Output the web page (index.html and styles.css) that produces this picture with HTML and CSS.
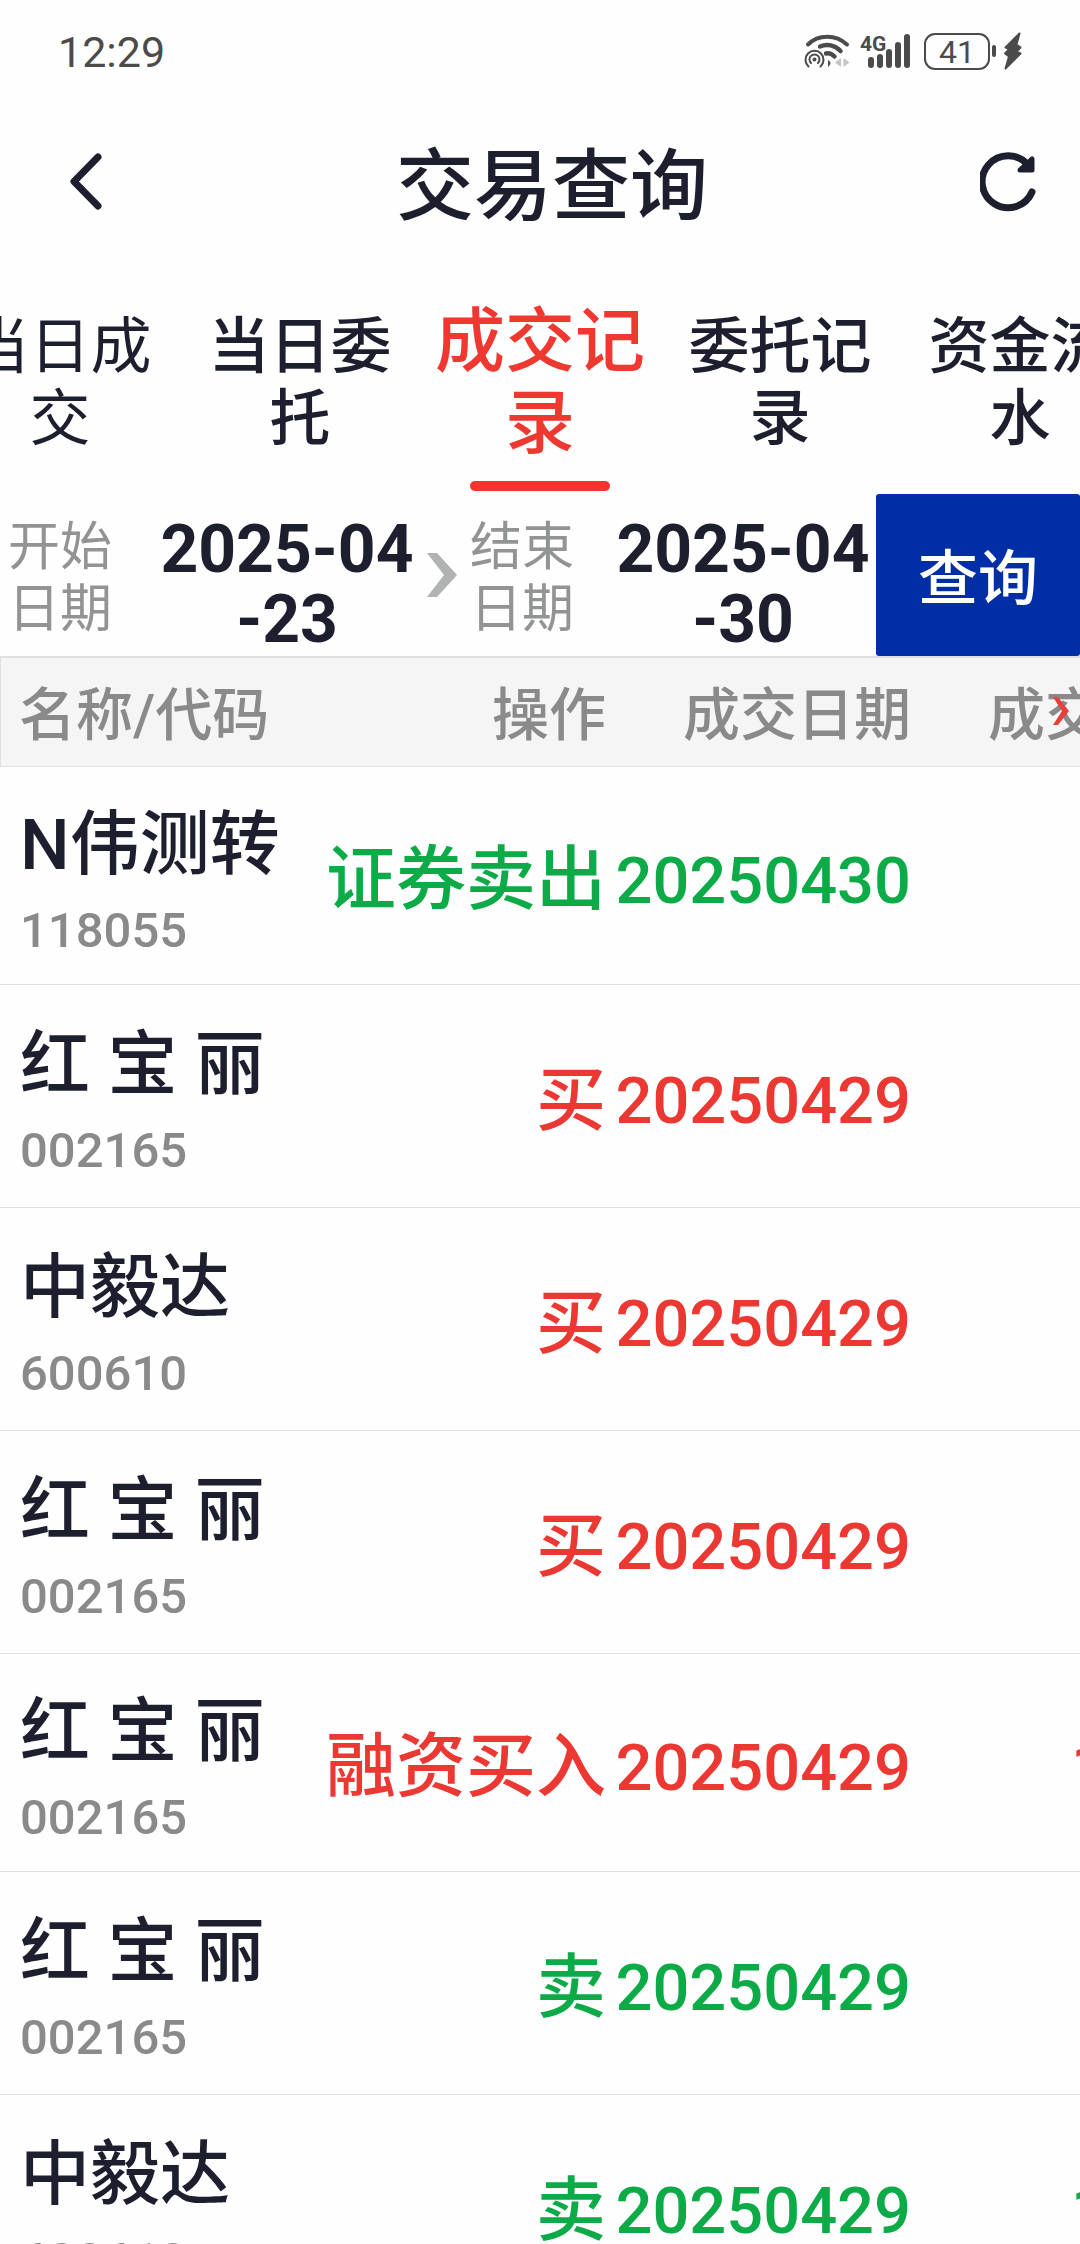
FILE: index.html
```html
<!DOCTYPE html>
<html lang="zh-CN">
<head>
<meta charset="utf-8">
<meta name="viewport" content="width=device-width, initial-scale=1">
<title>交易查询</title>
<link rel="stylesheet" href="styles.css">
</head>
<body>
<div class="status-bar">
  <span class="clock">12:29</span>
  <div class="status-icons">
    <svg class="wifi" width="46" height="38" viewBox="0 0 46 38" fill="none" stroke="#4b4b4b" stroke-width="4" stroke-linecap="round">
      <path d="M4 12.500C14 2 32 2 43 12.500"/>
      <path d="M16 14.500C23 11.500 31 13 36.500 19" stroke-width="4.500"/>
      <path d="M22 21.500c3-.5 6 .5 8.500 3" stroke-width="4.500"/>
      <path d="M4.500 34.500A9 9 0 1 1 16.500 34.500" stroke-width="2"/>
      <path d="M7 31A5 5 0 1 1 14 31" stroke-width="2"/>
      <circle cx="10.500" cy="27.500" r="2" fill="#4b4b4b" stroke="none"/>
      <path d="M24 28q5 3 0 7z" fill="#4b4b4b" stroke="none"/>
      <path d="M37 26v9l-6-4.500zM39.500 26v9l6-4.500z" fill="#c4c4c4" stroke="none"/>
    </svg>
    <svg class="signal" width="52" height="38" viewBox="0 0 52 38" fill="#4b4b4b">
      <text x="0" y="19" class="network">4G</text>
      <rect x="8" y="25" width="6" height="11" rx="3"/>
      <rect x="17" y="22" width="6" height="14" rx="3"/>
      <rect x="26" y="17" width="6" height="19" rx="3"/>
      <rect x="35" y="10" width="6" height="26" rx="3"/>
      <rect x="44" y="2" width="6" height="34" rx="3"/>
    </svg>
    <span class="battery">41</span>
    <span class="battery-tip"></span>
    <svg class="bolt" width="18" height="38" viewBox="0 0 18 38" fill="#4b4b4b"><path d="M15.500 1.500 1.500 15.500l3.500 2-4 4 4 3-3.500 12 15-15-4-2 4-4-4-3z" stroke="#4b4b4b" stroke-width="2" stroke-linejoin="round"/></svg>
  </div>
</div>

<header class="title-bar">
  <button class="icon-button" type="button" aria-label="返回">
    <svg width="36" height="60" viewBox="0 0 36 60" fill="none" stroke="#1e1f2e" stroke-width="7" stroke-linecap="round" stroke-linejoin="round"><path d="M30 5 6 29.500 30 54"/></svg>
  </button>
  <h1>交易查询</h1>
  <button class="icon-button refresh" type="button" aria-label="刷新">
    <svg width="56" height="60" viewBox="0 0 56 60" fill="none" stroke="#1e1f2e" stroke-width="7" stroke-linecap="round" stroke-linejoin="round"><path d="M52 40A26 26 0 1 1 48 13"/><path d="M52 7v11H40z" fill="#1e1f2e" stroke-width="5"/></svg>
  </button>
</header>

<nav class="tabs">
  <a class="tab light" href="#deals-today">当日成交</a>
  <a class="tab" href="#orders-today">当日委托</a>
  <a class="tab active" href="#deals">成交记录</a>
  <a class="tab" href="#orders">委托记录</a>
  <a class="tab" href="#funds">资金流水</a>
</nav>

<form class="range">
  <label class="range-label" for="start-date">开始日期</label>
  <button class="date" id="start-date" type="button">2025-04<br>-23</button>
  <svg class="range-arrow" width="32" height="46" viewBox="0 0 32 46" fill="#b1b3b3"><path d="M1 1h10l20 22-20 22H1l17-22z"/></svg>
  <label class="range-label" for="end-date">结束日期</label>
  <button class="date" id="end-date" type="button">2025-04<br>-30</button>
  <button class="query" type="submit">查询</button>
</form>

<main class="records">
  <table>
    <thead>
      <tr><th class="name-col">名称/代码</th><th class="action-col">操作</th><th class="date-col">成交日期</th><th class="more-col">成交</th></tr>
    </thead>
    <tbody>
      <tr class="sell compact"><td><span class="name">N伟测转</span><span class="code">118055</span></td><td>证券卖出</td><td>20250430</td><td></td></tr>
      <tr class="buy"><td><span class="name">红 宝 丽</span><span class="code">002165</span></td><td>买</td><td>20250429</td><td></td></tr>
      <tr class="buy"><td><span class="name">中毅达</span><span class="code">600610</span></td><td>买</td><td>20250429</td><td></td></tr>
      <tr class="buy"><td><span class="name">红 宝 丽</span><span class="code">002165</span></td><td>买</td><td>20250429</td><td></td></tr>
      <tr class="buy compact"><td><span class="name">红 宝 丽</span><span class="code">002165</span></td><td>融资买入</td><td>20250429</td><td>1</td></tr>
      <tr class="sell"><td><span class="name">红 宝 丽</span><span class="code">002165</span></td><td>卖</td><td>20250429</td><td></td></tr>
      <tr class="sell"><td><span class="name">中毅达</span><span class="code">600610</span></td><td>卖</td><td>20250429</td><td>1</td></tr>
    </tbody>
  </table>
  <svg class="scroll-hint" width="18" height="28" viewBox="0 0 18 28" fill="#e5403a"><path d="M1 0h5l11 14L6 28H1l9-14z"/></svg>
</main>
</body>
</html>
```
FILE: styles.css
```css
* {
  box-sizing: border-box;
}

html {
  height: 100%;
  overflow: hidden;
}

body {
  margin: 0;
  height: 100%;
  overflow: hidden;
  background: #fefefe;
  color: #1e1f2e;
  font-family: Roboto, "Noto Sans CJK SC", sans-serif;
  font-weight: 500;
}

button {
  padding: 0;
  border: 0;
  background: none;
  color: inherit;
  font: inherit;
}

svg {
  display: block;
}

.status-bar {
  display: flex;
  align-items: center;
  justify-content: space-between;
  height: 102px;
  padding: 0 58px;
  color: #4b4b4b;
}

.clock {
  padding-top: 2px;
  font-size: 43px;
  font-weight: 400;
}

.status-icons {
  display: flex;
  align-items: center;
}

.signal {
  margin: 0 12px 0 10px;
}

.network {
  font-size: 21px;
  font-weight: 700;
}

.battery {
  width: 66px;
  height: 37px;
  border: 2px solid #4b4b4b;
  border-radius: 11px;
  font-size: 32px;
  font-weight: 400;
  line-height: 34px;
  text-align: center;
}

.battery-tip {
  width: 4px;
  height: 12px;
  margin: 0 8px 0 2px;
  border-radius: 2px;
  background: #4b4b4b;
}

.title-bar {
  display: grid;
  grid-template-columns: 1fr auto 1fr;
  align-items: center;
  height: 160px;
  padding: 0 44px 0 68px;
}

.title-bar h1 {
  margin: 0;
  padding-top: 12px;
  font-size: 78px;
  font-weight: 500;
  line-height: 100px;
}

.icon-button {
  justify-self: start;
}

.icon-button.refresh {
  justify-self: end;
}

.tabs {
  display: flex;
  justify-content: center;
  height: 232px;
}

.tab {
  display: flex;
  flex: 0 0 240px;
  flex-direction: column;
  justify-content: center;
  position: relative;
  padding: 10px 12px 0;
  color: inherit;
  font-size: 61px;
  line-height: 72px;
  text-align: center;
  text-decoration: none;
}

.tab.light {
  font-weight: 400;
}

.tab.active {
  color: #ee3830;
  font-size: 70px;
  line-height: 82px;
}

.tab.active::after {
  content: "";
  position: absolute;
  bottom: 3px;
  left: 50px;
  width: 140px;
  height: 10px;
  border-radius: 5px;
  background: #f2352e;
}

.range {
  display: grid;
  grid-template-columns: 104px 1fr 32px 104px 1fr 204px;
  align-items: center;
  height: 162px;
  padding-left: 8px;
}

.range-label {
  padding-top: 8px;
  color: #929494;
  font-size: 52px;
  font-weight: 400;
  line-height: 62px;
}

.range-arrow + .range-label {
  margin-left: 12px;
  margin-right: -12px;
}

.date {
  padding: 20px 0 0 36px;
  font-size: 66px;
  font-weight: 700;
  line-height: 70px;
  white-space: nowrap;
}

#end-date {
  padding-left: 48px;
}

.query {
  height: 100%;
  padding-bottom: 4px;
  border-radius: 3px;
  background: #002ea6;
  color: #fff;
  font-size: 60px;
}

.records {
  position: relative;
  overflow: hidden;
}

table {
  width: 100%;
  border-collapse: separate;
  border-spacing: 0;
  table-layout: fixed;
}

th,
td {
  padding: 0;
  border-bottom: 1px solid #e1e1e1;
  text-align: right;
  white-space: nowrap;
}

th {
  height: 111px;
  padding-bottom: 4px;
  border-top: 2px solid #dfdfdf;
  background: #f5f5f5;
  color: #8a8a8a;
  font-size: 57px;
  font-weight: 500;
}

th:first-child {
  padding-left: 18px;
  border-left: 1px solid #dfdfdf;
  text-align: left;
}

.name-col {
  width: 302px;
}

.action-col {
  width: 304px;
}

.date-col {
  width: 305px;
}

.more-col {
  padding-left: 77px;
  text-align: left;
}

td {
  height: 223px;
  padding-top: 10px;
  font-size: 65px;
}

td:first-child {
  padding-left: 20px;
  text-align: left;
}

td:nth-child(2) {
  padding-top: 0;
  padding-bottom: 4px;
  font-size: 70px;
}

td:nth-child(4) {
  padding-left: 160px;
  text-align: left;
}

.compact td {
  height: 218px;
}

.buy {
  color: #ec3833;
}

.sell {
  color: #0cab48;
}

.name,
.code {
  display: block;
}

.name {
  color: #1e1f2e;
  font-size: 70px;
  line-height: 100px;
}

.code {
  color: #8a8a8a;
  font-size: 49px;
  line-height: 72px;
}

.scroll-hint {
  position: absolute;
  top: 41px;
  right: 10px;
}
```
